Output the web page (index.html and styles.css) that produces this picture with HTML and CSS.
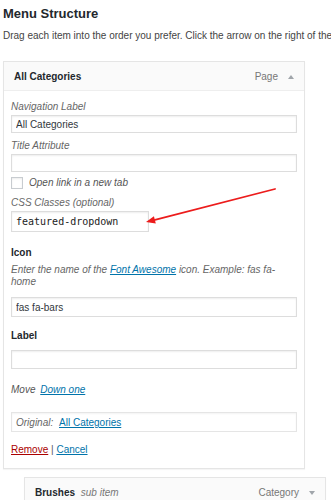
FILE: index.html
```html
<!DOCTYPE html>
<html lang="en">
<head>
  <meta charset="UTF-8">
  <title>Menu Structure</title>
  <link rel="stylesheet" href="styles.css">
</head>
<body>

<h2 class="page-title">Menu Structure</h2>
<p class="intro">Drag each item into the order you prefer. Click the arrow on the right of the</p>

<div class="menu-item">
  <div class="item-bar">
    <span class="item-title">All Categories</span>
    <span class="item-type">Page</span>
    <span class="toggle up"></span>
  </div>

  <div class="item-settings">
    <div class="field">
      <label class="field-label">Navigation Label</label>
      <input class="text-input" type="text" value="All Categories">
    </div>
    <div class="field field-title">
      <label class="field-label">Title Attribute</label>
      <input class="text-input" type="text" value="">
    </div>
    <label class="check-row">
      <input class="check" type="checkbox">
      <span>Open link in a new tab</span>
    </label>
    <div class="field field-css">
      <label class="field-label">CSS Classes (optional)</label>
      <input class="text-input mono" type="text" value="featured-dropdown">
    </div>

    <div class="field field-icon">
      <label class="strong-label">Icon</label>
      <p class="hint">Enter the name of the <a href="#">Font Awesome</a> icon. Example: fas fa-home</p>
      <input class="text-input tall" type="text" value="fas fa-bars">
    </div>
    <div class="field field-label-text">
      <label class="strong-label">Label</label>
      <input class="text-input mid" type="text" value="">
    </div>

    <p class="move">Move <a href="#">Down one</a></p>

    <div class="original">
      Original: <a href="#">All Categories</a>
    </div>

    <div class="actions">
      <a class="remove" href="#">Remove</a> | <a href="#">Cancel</a>
    </div>
  </div>
</div>

<div class="menu-item sub">
  <div class="item-bar">
    <span class="item-title">Brushes <em class="sub-note">sub item</em></span>
    <span class="item-type">Category</span>
    <span class="toggle down"></span>
  </div>
</div>

<!-- annotation arrow drawn over the screenshot -->
<svg class="annotation" width="331" height="500" viewBox="0 0 331 500">
  <line x1="275" y1="189" x2="153" y2="220.3" stroke="#ec1c1c" stroke-width="1.8" stroke-linecap="round"/>
  <polygon points="146,222 155.8,223.4 153.9,216.3" fill="#ec1c1c"/>
</svg>

</body>
</html>
```

FILE: styles.css
```css
* {
  box-sizing: border-box;
}

body {
  margin: 0;
  padding: 0 0 0 3px;
  font-family: "Liberation Sans", Arial, sans-serif;
  font-size: 10px;
  line-height: 12px;
  color: #444;
  background-color: #fff;
  overflow: hidden;
  position: relative;
}

a {
  color: #0073aa;
}

.page-title {
  margin: 0;
  padding-top: 6px;
  font-size: 13px;
  line-height: 15px;
  font-weight: bold;
  color: #23282d;
}

.intro {
  margin: 9px 0 0;
  white-space: nowrap;
  overflow: hidden;
  color: #444;
}

/* menu item panel */
.menu-item {
  width: 302px;
  margin-top: 19px;
  border: 1px solid #e5e5e5;
  background-color: #fff;
  box-shadow: 0 1px 1px rgba(0,0,0,0.04);
}

.menu-item.sub {
  margin-top: 8px;
  margin-left: 21px;
}

.item-bar {
  display: flex;
  align-items: center;
  padding: 9px 10px 7px 10px;
  background-color: #fafafa;
  border-bottom: 1px solid #eee;
}

.item-title {
  flex: 1;
  font-weight: bold;
  color: #23282d;
}

.sub-note {
  font-weight: normal;
  color: #777;
  margin-left: 3px;
}

.item-type {
  color: #777;
  margin-right: 10px;
}

.toggle {
  width: 0;
  height: 0;
  border-left: 3px solid transparent;
  border-right: 3px solid transparent;
}

.toggle.up {
  border-bottom: 4px solid #a0a5aa;
}

.toggle.down {
  border-top: 4px solid #a0a5aa;
}

.item-settings {
  padding: 10px 7px 12px 7px;
}

.field {
  display: flex;
  flex-direction: column;
}

.field-label {
  font-style: italic;
  color: #666;
  margin-bottom: 2px;
}

.text-input {
  width: 100%;
  height: 18px;
  margin: 0;
  padding: 0 4px;
  border: 1px solid #ddd;
  box-shadow: inset 0 1px 2px rgba(0,0,0,0.07);
  font-family: "Liberation Sans", Arial, sans-serif;
  font-size: 10px;
  color: #32373c;
  background-color: #fff;
  outline: none;
}

.text-input.mono {
  width: 138px;
  height: 21px;
  font-family: "DejaVu Sans Mono", "Liberation Mono", monospace;
  font-size: 10px;
  color: #222;
}

.text-input.tall {
  height: 20px;
  margin-top: 9px;
}

.text-input.mid {
  height: 19px;
  margin-top: 8px;
}

.field-title {
  margin-top: 7px;
}

.check-row {
  display: flex;
  align-items: center;
  margin-top: 5px;
  font-style: italic;
  color: #555;
}

.check {
  appearance: none;
  -webkit-appearance: none;
  width: 12px;
  height: 12px;
  margin: 0 6px 0 0;
  border: 1px solid #c8ccd0;
  background-color: #fff;
  box-shadow: inset 0 1px 2px rgba(0,0,0,0.08);
}

.field-css {
  margin-top: 8px;
}

.field-icon {
  margin-top: 15px;
}

.strong-label {
  font-weight: bold;
  color: #23282d;
}

.hint {
  margin: 5px 0 0;
  font-style: italic;
  color: #666;
}

.field-label-text {
  margin-top: 13px;
}

.move {
  margin: 15px 0 0;
  font-style: italic;
  color: #555;
}

.move a {
  margin-left: 2px;
}

.original {
  height: 20px;
  margin-top: 16px;
  padding: 4px 4px 0;
  border: 1px solid #e5e5e5;
  box-shadow: inset 0 1px 2px rgba(0,0,0,0.05);
  font-style: italic;
  color: #666;
}

.original a {
  font-style: normal;
  margin-left: 3px;
}

.actions {
  margin-top: 12px;
  color: #555;
}

.actions .remove {
  color: #a00;
}

.annotation {
  position: absolute;
  top: 0;
  left: 0;
  pointer-events: none;
}
```
